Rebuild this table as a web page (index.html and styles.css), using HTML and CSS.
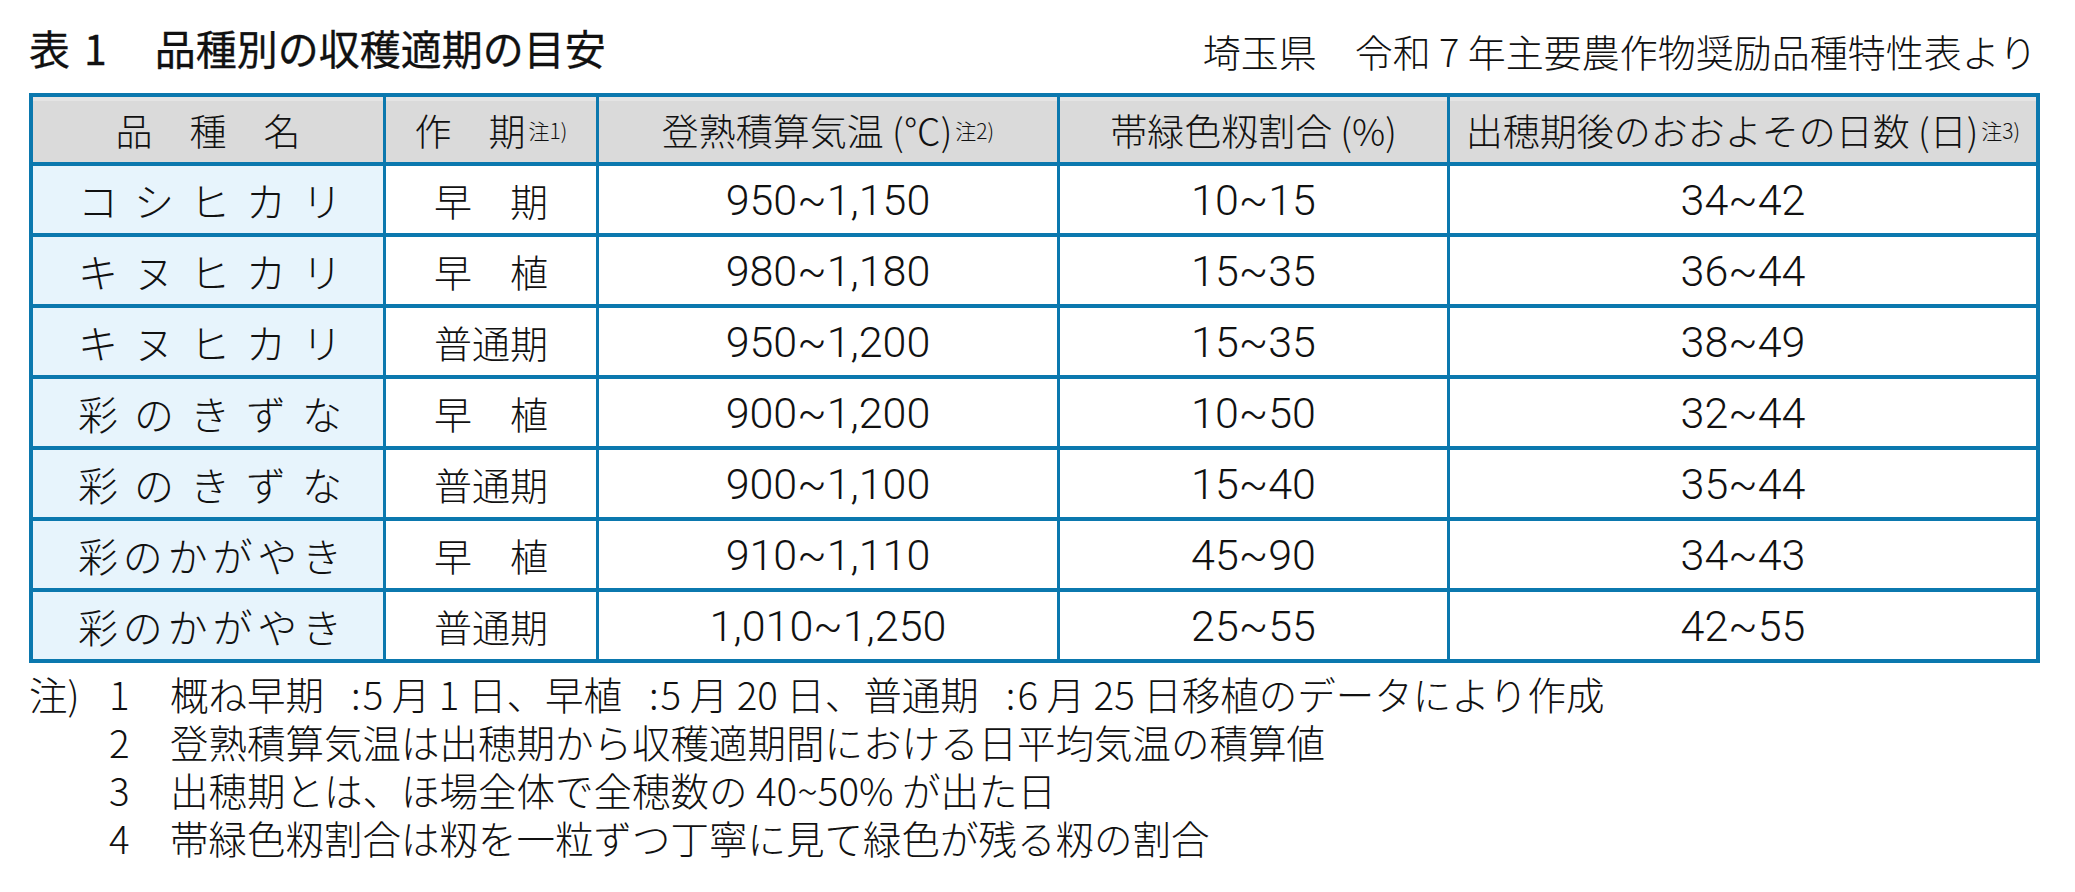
FILE: index.html
```html
<!DOCTYPE html>
<html lang="ja">
<head>
<meta charset="utf-8">
<title>表1 品種別の収穫適期の目安</title>
<link rel="stylesheet" href="styles.css">
</head>
<body>
<div class="page">
  <div class="titlebar">
    <h1 class="title">表<span class="title-num">1</span>品種別の収穫適期の目安</h1>
    <p class="source">埼玉県　令和 7 年主要農作物奨励品種特性表より</p>
  </div>

  <div class="grid">
    <div class="cell head">品　種　名</div>
    <div class="cell head">作　期<span class="ref">注1)</span></div>
    <div class="cell head">登熟積算気温 (℃)<span class="ref">注2)</span></div>
    <div class="cell head">帯緑色籾割合 (%)</div>
    <div class="cell head">出穂期後のおおよその日数 (日)<span class="ref">注3)</span></div>

    <div class="cell name"><span class="just"><span>コ</span><span>シ</span><span>ヒ</span><span>カ</span><span>リ</span></span></div>
    <div class="cell period">早　期</div>
    <div class="cell num">950~1,150</div>
    <div class="cell num">10~15</div>
    <div class="cell num">34~42</div>

    <div class="cell name"><span class="just"><span>キ</span><span>ヌ</span><span>ヒ</span><span>カ</span><span>リ</span></span></div>
    <div class="cell period">早　植</div>
    <div class="cell num">980~1,180</div>
    <div class="cell num">15~35</div>
    <div class="cell num">36~44</div>

    <div class="cell name"><span class="just"><span>キ</span><span>ヌ</span><span>ヒ</span><span>カ</span><span>リ</span></span></div>
    <div class="cell period">普通期</div>
    <div class="cell num">950~1,200</div>
    <div class="cell num">15~35</div>
    <div class="cell num">38~49</div>

    <div class="cell name"><span class="just"><span>彩</span><span>の</span><span>き</span><span>ず</span><span>な</span></span></div>
    <div class="cell period">早　植</div>
    <div class="cell num">900~1,200</div>
    <div class="cell num">10~50</div>
    <div class="cell num">32~44</div>

    <div class="cell name"><span class="just"><span>彩</span><span>の</span><span>き</span><span>ず</span><span>な</span></span></div>
    <div class="cell period">普通期</div>
    <div class="cell num">900~1,100</div>
    <div class="cell num">15~40</div>
    <div class="cell num">35~44</div>

    <div class="cell name"><span class="just"><span>彩</span><span>の</span><span>か</span><span>が</span><span>や</span><span>き</span></span></div>
    <div class="cell period">早　植</div>
    <div class="cell num">910~1,110</div>
    <div class="cell num">45~90</div>
    <div class="cell num">34~43</div>

    <div class="cell name"><span class="just"><span>彩</span><span>の</span><span>か</span><span>が</span><span>や</span><span>き</span></span></div>
    <div class="cell period">普通期</div>
    <div class="cell num">1,010~1,250</div>
    <div class="cell num">25~55</div>
    <div class="cell num">42~55</div>
  </div>

  <div class="notes">
    <div class="note-row">
      <span class="note-label">注)</span><span class="note-no">1</span><span class="note-text">概ね早期<span class="colon">:</span>5 月 1 日、早植<span class="colon">:</span>5 月 20 日、普通期<span class="colon">:</span>6 月 25 日移植のデータにより作成</span>
    </div>
    <div class="note-row indent">
      <span class="note-no">2</span><span class="note-text">登熟積算気温は出穂期から収穫適期間における日平均気温の積算値</span>
    </div>
    <div class="note-row indent">
      <span class="note-no">3</span><span class="note-text">出穂期とは、ほ場全体で全穂数の 40~50% が出た日</span>
    </div>
    <div class="note-row indent">
      <span class="note-no">4</span><span class="note-text">帯緑色籾割合は籾を一粒ずつ丁寧に見て緑色が残る籾の割合</span>
    </div>
  </div>
</div>
</body>
</html>
```

FILE: styles.css
```css
html, body {
  margin: 0;
  padding: 0;
  background: #ffffff;
}

body {
  font-family: "Noto Sans CJK JP", "Noto Sans", sans-serif;
  font-weight: 300;
  color: #111111;
}

.page {
  width: 2075px;
  padding: 27px 35px 0 29px;
  box-sizing: border-box;
}

.titlebar {
  display: flex;
  justify-content: space-between;
  align-items: flex-end;
  height: 41px;
  margin-bottom: 25px;
}

.title {
  margin: 0;
  font-size: 41px;
  line-height: 41px;
  font-weight: 400;
  -webkit-text-stroke: 0.3px #111111;
  white-space: nowrap;
}

.title-num {
  margin: 0 48px 0 14px;
}

.source {
  margin: 0 3px 0 0;
  font-size: 38px;
  line-height: 38px;
  white-space: nowrap;
  position: relative;
  top: 2px;
}

.grid {
  display: grid;
  grid-template-columns: 350px 210px 458px 387px 586px;
  grid-template-rows: 65px repeat(7, 67px);
  column-gap: 3px;
  row-gap: 4px;
  padding: 4px;
  background: #0b78ae;
  width: 2011px;
  box-sizing: border-box;
}

.cell {
  background: #ffffff;
  display: flex;
  align-items: center;
  justify-content: center;
  white-space: nowrap;
}

.head {
  background: #dadada;
  box-shadow: inset 0 4px 0 #e4e4e4;
  font-size: 37px;
  line-height: 40px;
}

.ref {
  font-size: 21px;
  line-height: 0;
  vertical-align: 13px;
  margin-left: 3px;
}

.name {
  background: #e7f4fc;
  font-size: 40px;
  line-height: 44px;
}

.just {
  display: flex;
  justify-content: space-between;
  width: 264px;
  margin-left: 4px;
}

.period {
  font-size: 38px;
  line-height: 44px;
}

.num {
  font-family: Roboto, "Liberation Sans", sans-serif;
  font-weight: 300;
  font-size: 43px;
  line-height: 48px;
}

.notes {
  display: flex;
  flex-direction: column;
  margin-top: 6px;
  font-size: 38.5px;
  line-height: 48px;
}

.note-row {
  display: flex;
  height: 48px;
  white-space: nowrap;
}

.note-row.indent {
  padding-left: 79px;
}

.note-label {
  width: 79px;
  flex: none;
}

.note-no {
  width: 62px;
  flex: none;
  padding-left: 1px;
  box-sizing: border-box;
}

.note-text {
  flex: none;
}

.colon {
  padding: 0 2px 0 27px;
}
```
